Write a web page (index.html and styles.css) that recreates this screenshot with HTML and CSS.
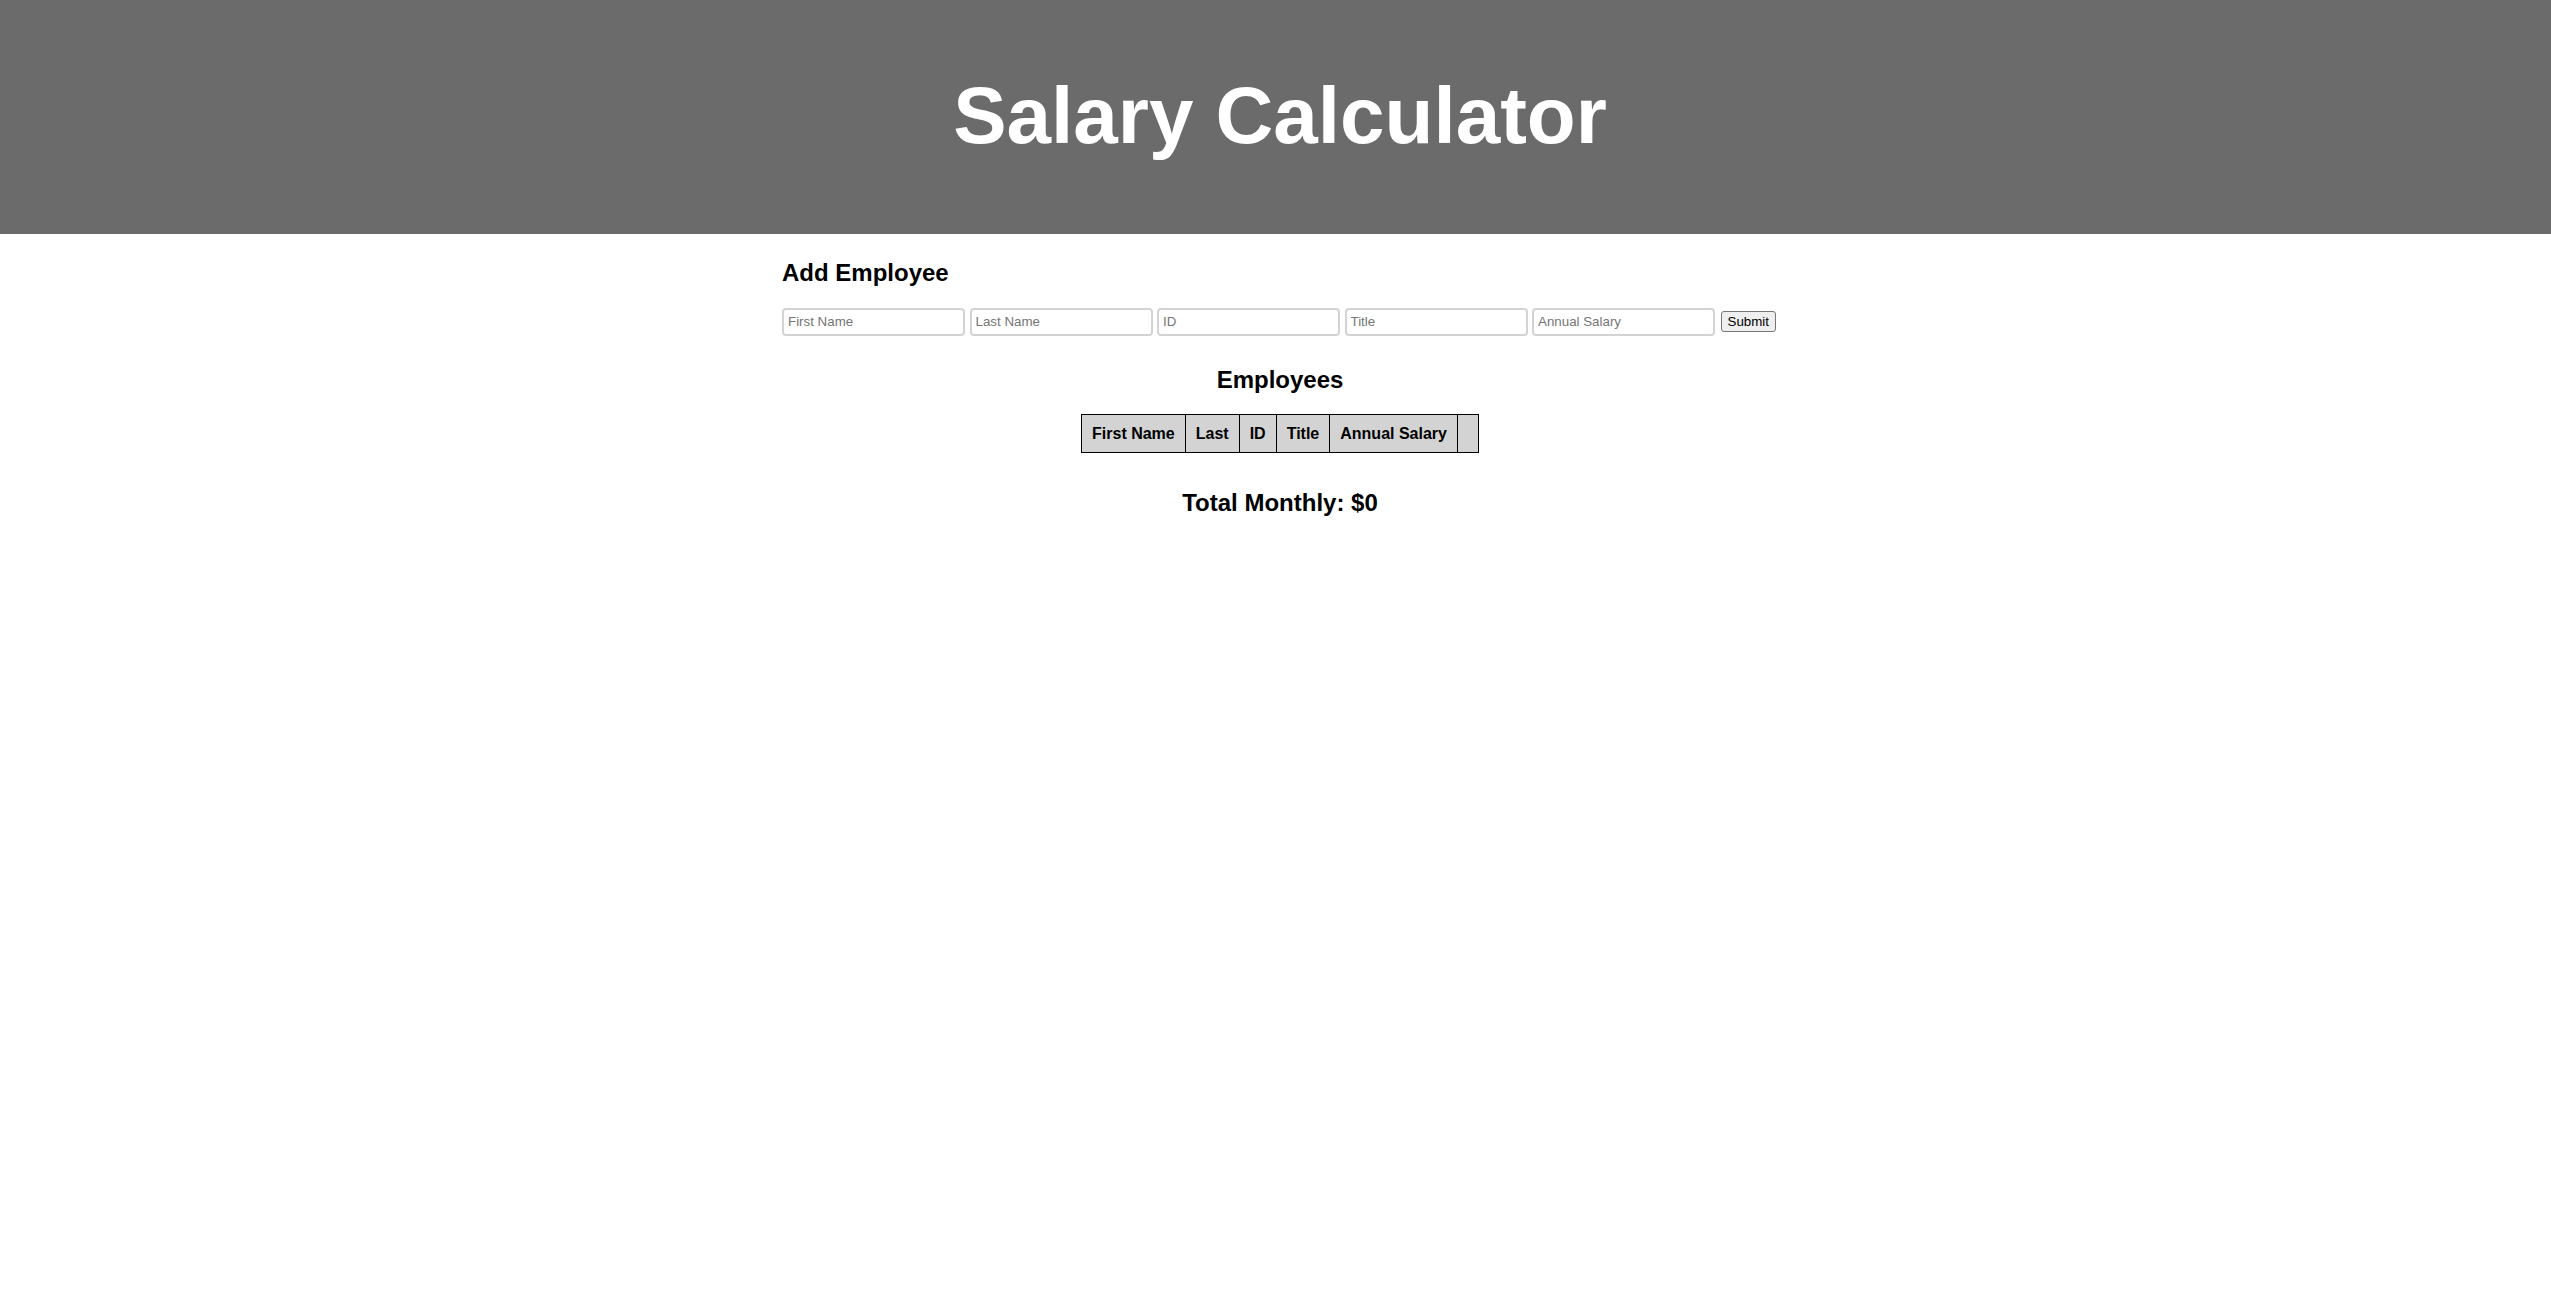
FILE: index.html
```html
<!DOCTYPE html>
<html lang="en">
<head>
<meta charset="utf-8">
<title>Salary Calculator</title>
<link rel="stylesheet" href="styles.css">
</head>
<body>
<header class="site-header">
  <h1 class="site-title">Salary Calculator</h1>
</header>
<main class="page">
  <section class="container">
    <h2 class="section-title">Add Employee</h2>
    <form class="employee-form">
      <input class="field" type="text" placeholder="First Name">
      <input class="field" type="text" placeholder="Last Name">
      <input class="field" type="text" placeholder="ID">
      <input class="field" type="text" placeholder="Title">
      <input class="field" type="text" placeholder="Annual Salary">
      <button class="submit-btn" type="button">Submit</button>
    </form>
    <h2 class="section-title centered employees-title">Employees</h2>
    <table class="employee-table">
      <thead>
        <tr>
          <th>First Name</th>
          <th>Last</th>
          <th>ID</th>
          <th>Title</th>
          <th>Annual Salary</th>
          <th></th>
        </tr>
      </thead>
      <tbody></tbody>
    </table>
    <h2 class="section-title centered total-title">Total Monthly: $0</h2>
  </section>
</main>
</body>
</html>
```
FILE: styles.css
```css
html, body {
  margin: 0;
  padding: 0;
  background: #ffffff;
}

body {
  font-family: "Liberation Sans", Arial, sans-serif;
  color: #000;
}

.site-header {
  background: #6b6b6b;
  height: 234px;
  box-sizing: border-box;
  padding: 70px 0 0 9px;
}

.site-title {
  margin: 0;
  color: #ffffff;
  font-size: 80px;
  font-weight: bold;
  text-align: center;
  line-height: normal;
}

.page {
  padding-left: 9px;
}

.container {
  width: 996px;
  margin: 0 auto;
}

.section-title {
  font-size: 24px;
  font-weight: bold;
  line-height: normal;
  margin: 25px 0 20px;
}

.centered {
  text-align: center;
}

.employee-form {
  display: flex;
  align-items: center;
  gap: 4.5px;
  height: 28px;
  margin-top: 21px;
}

.field {
  flex: 0 0 auto;
  width: 183px;
  height: 28px;
  box-sizing: border-box;
  border: 2px solid #d3d3d3;
  border-radius: 4px;
  padding: 1px 4px 3px;
  font-family: "Liberation Sans", Arial, sans-serif;
  font-size: 13.33px;
  color: #000;
  background: #fff;
  outline: none;
}

.field::placeholder {
  color: #757575;
}

.submit-btn {
  flex: 0 0 auto;
  margin-left: 1px;
  margin-bottom: 2px;
  height: 21px;
  box-sizing: border-box;
  padding: 1px 6px;
  border: 1px solid #767676;
  border-radius: 3px;
  background: #efefef;
  font-family: "Liberation Sans", Arial, sans-serif;
  font-size: 13.33px;
  color: #000;
  line-height: normal;
}

.employees-title {
  margin: 30px 0 20px;
}

.employee-table {
  border-collapse: collapse;
  margin: 0 auto;
}

.employee-table th {
  background: #d3d3d3;
  border: 1px solid #000;
  padding: 10px 10px 9px;
  font-size: 16px;
  font-weight: bold;
  white-space: nowrap;
}

.total-title {
  margin: 36px 0 0;
}
```
